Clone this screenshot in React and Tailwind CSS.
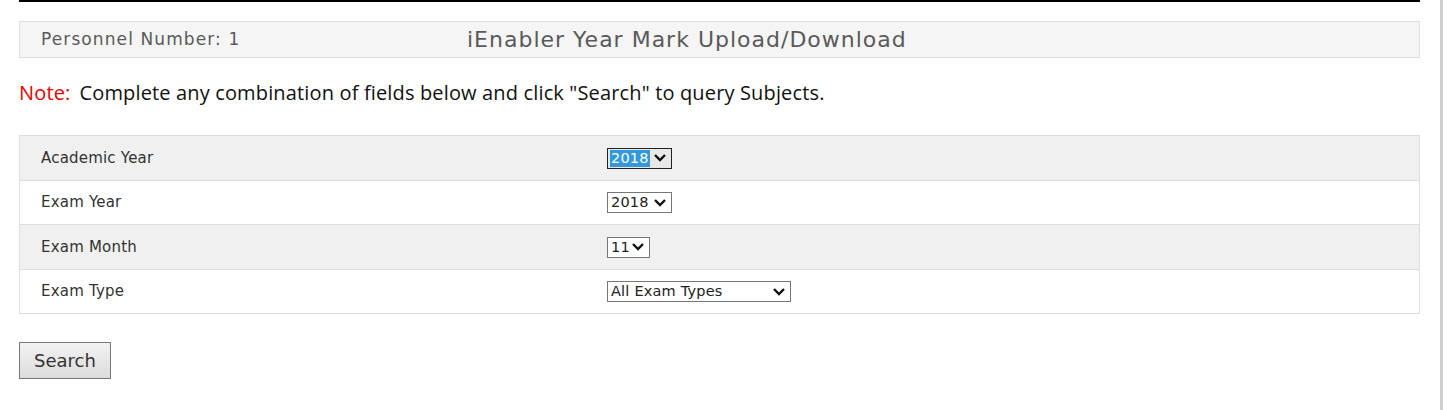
import React from 'react';

const rows = [
  { label: 'Academic Year', value: '2018', width: 'w-[65px]', selected: true, h: 'h-[44px]' },
  { label: 'Exam Year', value: '2018', width: 'w-[65px]', h: 'h-[44px]' },
  { label: 'Exam Month', value: '11', width: 'w-[43px]', h: 'h-[45px]' },
  { label: 'Exam Type', value: 'All Exam Types', width: 'w-[184px]', h: 'h-[44px]' },
];

function Chevron() {
  return (
    <svg width="14" height="10" viewBox="0 0 14 10" className="shrink-0">
      <polyline points="2,2 7,7 12,2" fill="none" stroke="#111" strokeWidth="2.4" />
    </svg>
  );
}

function FakeSelect({ value, width, selected }) {
  return (
    <div
      className={`${width} h-[21px] flex items-center justify-between pl-[2px] pr-[4px] border ${
        selected ? 'border-[#222] bg-[#e8e8e8]' : 'border-[#767676] bg-white'
      }`}
    >
      <span
        className={`text-[14.5px] leading-[17px] px-[1px] tracking-[0.2px] ${
          selected ? 'bg-[#3399dd] text-white' : 'text-[#222]'
        }`}
      >
        {value}
      </span>
      <Chevron />
    </div>
  );
}

export default function App() {
  return (
    <div className="flex h-[410px] bg-white font-['DejaVu_Sans',sans-serif]">
      <div className="w-[1420px] pl-[19px] shrink-0">
        {/* top rule */}
        <div className="h-[2px] bg-black" />

        {/* header bar */}
        <div className="mt-[19px] h-[37px] flex items-center bg-[#f5f5f5] border border-[#dedede] pl-[21px]">
          <div className="w-[426px] shrink-0 text-[17px] text-[#5a5a5a] tracking-[1.1px]">Personnel Number: 1</div>
          <div className="text-[22px] text-[#5a5a5a] tracking-[1px]">iEnabler Year Mark Upload/Download</div>
        </div>

        {/* note */}
        <p className="mt-[22px] leading-[26px] text-[20px] text-[#111] font-['Open_Sans',sans-serif] tracking-[0.15px]">
          <span className="text-[#ee0000]">Note:</span>
          <span className="ml-[9px]">Complete any combination of fields below and click "Search" to query Subjects.</span>
        </p>

        {/* search criteria */}
        <div className="mt-[29px] border border-[#dddddd]">
          {rows.map((r, i) => (
            <div
              key={r.label}
              className={`flex items-center ${r.h} ${i > 0 ? 'border-t border-[#dddddd]' : ''} ${
                i % 2 === 0 ? 'bg-[#f0f0f0]' : 'bg-white'
              }`}
            >
              <div className="w-[587px] shrink-0 pl-[21px] text-[15px] tracking-[0.2px] text-[#333]">{r.label}</div>
              <FakeSelect value={r.value} width={r.width} selected={r.selected} />
            </div>
          ))}
        </div>

        <button className="mt-[28px] w-[92px] h-[37px] border border-[#777] bg-gradient-to-b from-[#f2f2f2] to-[#dcdcdc] text-[18px] text-[#333]">
          Search
        </button>
      </div>
      <div className="w-[20px] shrink-0" />
      <div className="w-[3px] shrink-0 bg-[#cfcfcf]" />
    </div>
  );
}
